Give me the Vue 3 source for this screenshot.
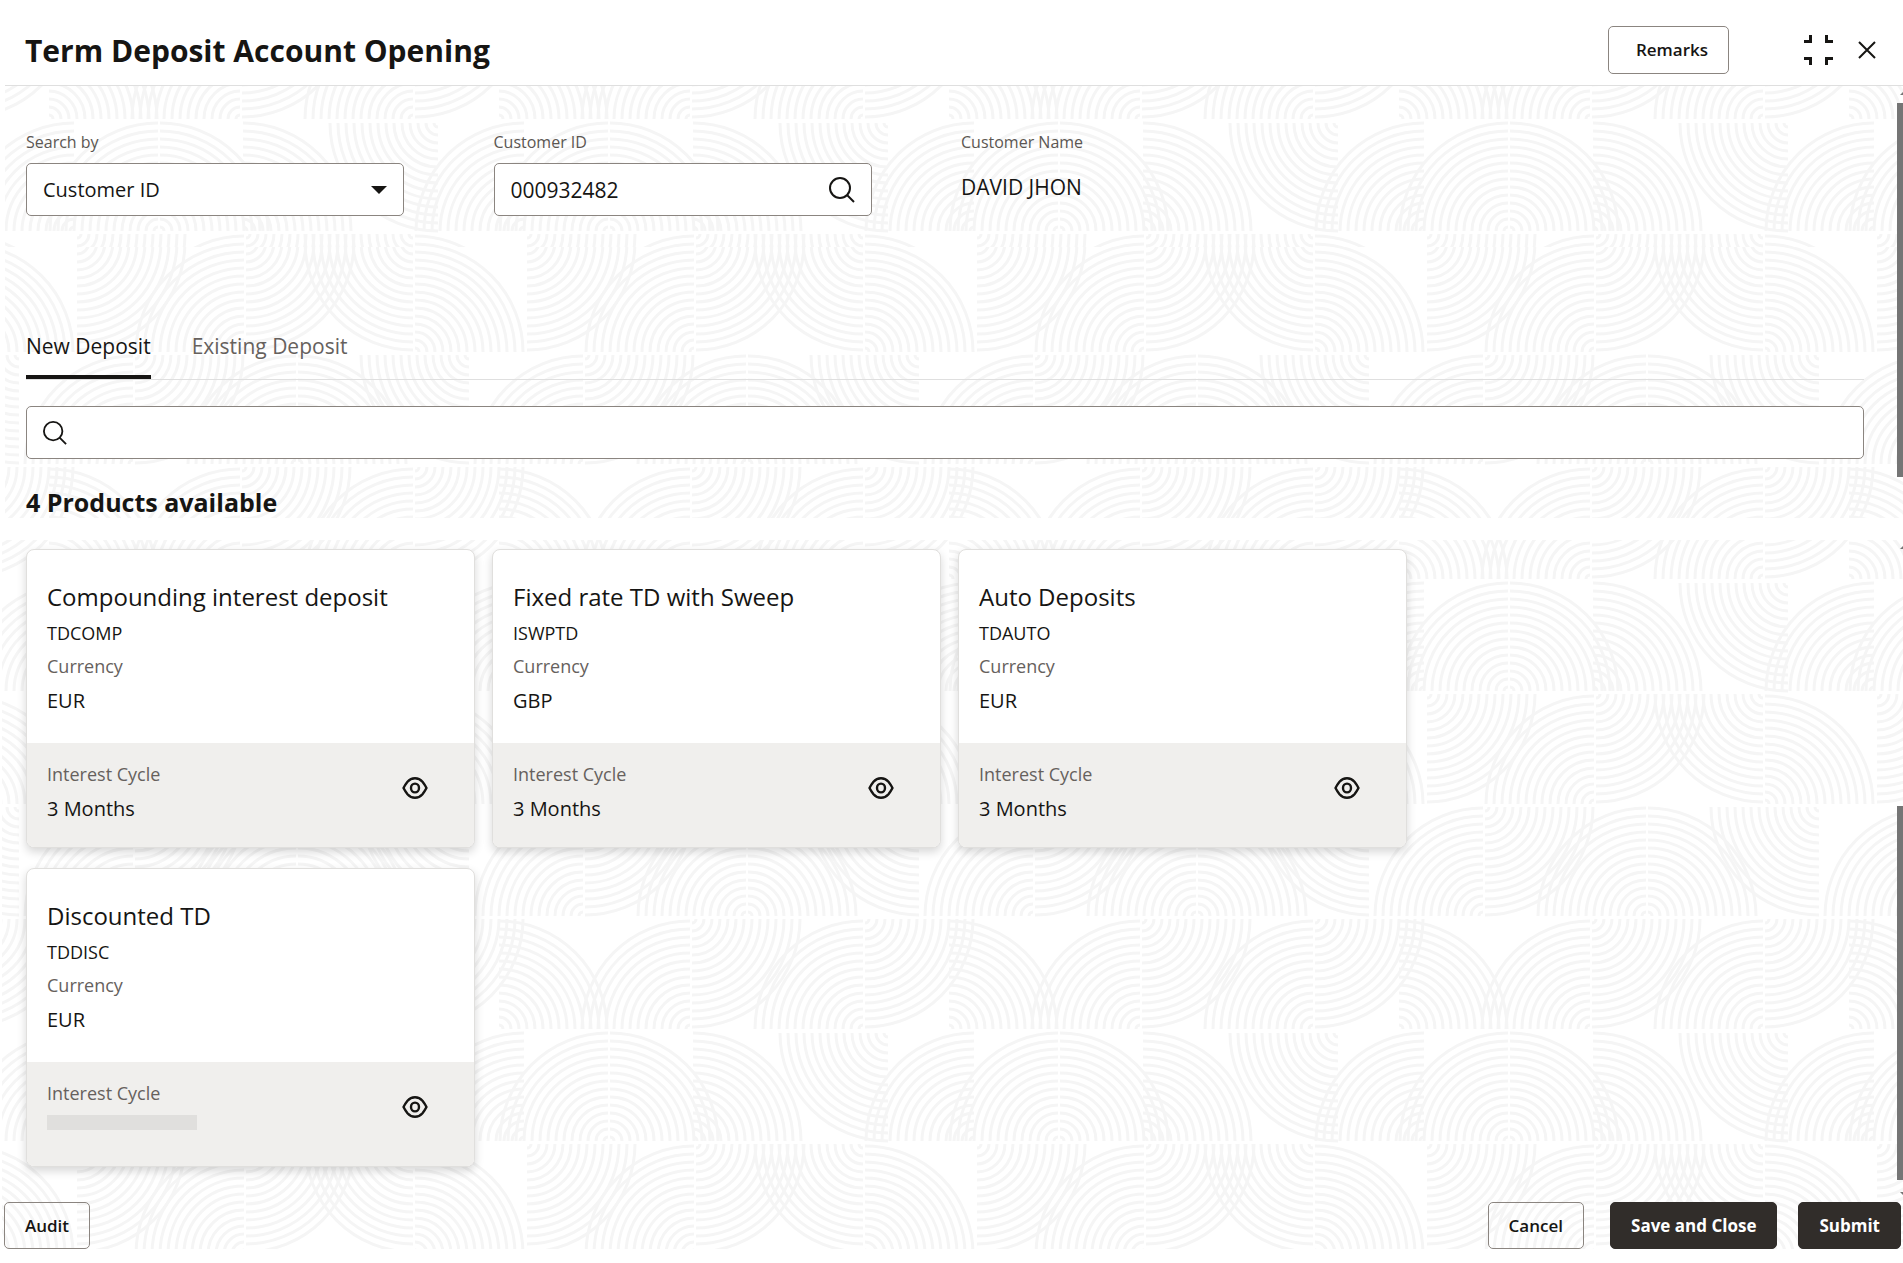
<template>
  <div class="page">
    <header class="page-header">
      <h1>Term Deposit Account Opening</h1>
      <div class="header-actions">
        <button class="btn remarks">Remarks</button>
        <button class="icon-btn" aria-label="Collapse">
          <svg width="29" height="30" viewBox="0 0 29 30" fill="none" stroke="#161513" stroke-width="3">
            <path d="M0 6.500h6.500V0M29 6.500h-6.500V0M0 23.500h6.500V30M29 23.500h-6.500V30" />
          </svg>
        </button>
        <button class="icon-btn" aria-label="Close">
          <svg width="18" height="18" viewBox="0 0 18 18" fill="none" stroke="#161513" stroke-width="2">
            <path d="M1 1l16 16M17 1L1 17" />
          </svg>
        </button>
      </div>
    </header>

    <div class="upper">
      <section class="search-section arcs">
        <div class="field">
          <label for="searchBy">Search by</label>
          <div class="control">
            <select id="searchBy" v-model="searchBy">
              <option>Customer ID</option>
              <option>Account Number</option>
            </select>
            <svg class="caret" width="16" height="8" viewBox="0 0 16 8">
              <path d="M0 0h16L8 8z" fill="#161513" />
            </svg>
          </div>
        </div>

        <div class="field">
          <label for="customerId">Customer ID</label>
          <div class="control">
            <input id="customerId" v-model="customerId" type="text" />
            <button class="icon-btn" aria-label="Find customer">
              <svg width="26" height="26" viewBox="0 0 26 26" fill="none" stroke="#161513" stroke-width="2">
                <circle cx="11" cy="11" r="10" />
                <path d="M18 18l7 7" />
              </svg>
            </button>
          </div>
        </div>

        <div class="field">
          <span class="label">Customer Name</span>
          <span class="value">DAVID JHON</span>
        </div>
      </section>

      <section class="filter-section arcs">
        <div class="tabs" role="tablist">
          <button
            v-for="tab in tabs"
            :key="tab"
            role="tab"
            class="tab"
            :class="{ active: tab === activeTab }"
            :aria-selected="tab === activeTab"
            @click="activeTab = tab"
          >
            {{ tab }}
          </button>
        </div>

        <div class="control product-search">
          <svg width="24" height="24" viewBox="0 0 26 26" fill="none" stroke="#161513" stroke-width="2">
            <circle cx="11" cy="11" r="10" />
            <path d="M18 18l7 7" />
          </svg>
          <input v-model="query" type="text" aria-label="Search products" />
        </div>

        <h2>{{ products.length }} Products available</h2>
      </section>

      <div class="scrollbar">
        <i class="arrow up"></i>
        <i class="thumb"></i>
      </div>
    </div>

    <main class="lower arcs">
      <div class="cards">
        <article v-for="product in products" :key="product.code" class="card">
          <div class="card-body">
            <h3>{{ product.name }}</h3>
            <p class="code">{{ product.code }}</p>
            <p class="caption">Currency</p>
            <p class="detail">{{ product.currency }}</p>
          </div>
          <div class="card-footer">
            <div>
              <p class="caption">Interest Cycle</p>
              <p v-if="product.cycle" class="detail">{{ product.cycle }}</p>
              <div v-else class="skeleton"></div>
            </div>
            <button class="icon-btn view" :aria-label="'View ' + product.name">
              <svg width="26" height="22" viewBox="0 0 26 22" fill="none" stroke="#161513" stroke-width="2.400">
                <path d="M1.500 11Q3 8 5.500 4.800Q8.500 1.300 13 1.300T20.500 4.800Q23 8 24.500 11Q23 14 20.500 17.200Q17.500 20.700 13 20.700T5.500 17.200Q3 14 1.500 11Z" stroke-linejoin="round" />
                <ellipse cx="13" cy="11" rx="4" ry="4.400" />
              </svg>
            </button>
          </div>
        </article>
      </div>

      <footer class="page-footer">
        <button class="btn">Audit</button>
        <div class="footer-actions">
          <button class="btn cancel">Cancel</button>
          <button class="btn dark">Save and Close</button>
          <button class="btn dark">Submit</button>
        </div>
      </footer>

      <div class="scrollbar">
        <i class="arrow up"></i>
        <i class="thumb"></i>
        <i class="arrow down"></i>
      </div>
    </main>
  </div>
</template>

<script setup>
import { ref } from "vue"

const searchBy = ref("Customer ID")
const customerId = ref("000932482")
const query = ref("")

const tabs = ["New Deposit", "Existing Deposit"]
const activeTab = ref("New Deposit")

const products = [
  { name: "Compounding interest deposit", code: "TDCOMP", currency: "EUR", cycle: "3 Months" },
  { name: "Fixed rate TD with Sweep", code: "ISWPTD", currency: "GBP", cycle: "3 Months" },
  { name: "Auto Deposits", code: "TDAUTO", currency: "EUR", cycle: "3 Months" },
  { name: "Discounted TD", code: "TDDISC", currency: "EUR", cycle: "" }
]
</script>

<style>
body {
  margin: 0;
  background: #fff;
}
</style>

<style scoped>
* {
  box-sizing: border-box;
}

.page {
  font-family: "Open Sans", "Noto Sans", sans-serif;
  color: #161513;
  padding-bottom: 14px;
}

h1,
h2,
h3,
p {
  margin: 0;
}

button,
input,
select {
  font-family: inherit;
  color: inherit;
}

/* quarter circles, four rows to a tile */
.arcs {
  background-image: url("data:image/svg+xml,%3Csvg xmlns='http://www.w3.org/2000/svg' width='450' height='450' fill='none' stroke='%23f5f5f5' stroke-width='3'%3E%3Cdefs%3E%3Cpath id='q' d='M4 0A4 4 0 0 1 0 4M12 0A12 12 0 0 1 0 12M20 0A20 20 0 0 1 0 20M28 0A28 28 0 0 1 0 28M36 0A36 36 0 0 1 0 36M44 0A44 44 0 0 1 0 44M52 0A52 52 0 0 1 0 52M60 0A60 60 0 0 1 0 60M68 0A68 68 0 0 1 0 68M76 0A76 76 0 0 1 0 76M84 0A84 84 0 0 1 0 84M92 0A92 92 0 0 1 0 92M100 0A100 100 0 0 1 0 100M108 0A108 108 0 0 1 0 108'/%3E%3C/defs%3E%3Cg%3E%3Cuse href='%23q' transform='translate(49 111) scale(1 -1)'/%3E%3Cuse href='%23q' transform='translate(240 111) scale(-1 -1)'/%3E%3Cuse href='%23q' transform='translate(242 1)'/%3E%3Cuse href='%23q' transform='translate(413 111) scale(-1 -1)'/%3E%3Cuse href='%23q' transform='translate(415 1)'/%3E%3Cuse href='%23q' transform='translate(-35 1)'/%3E%3C/g%3E%3Cg%3E%3Cuse href='%23q' transform='translate(74 223) scale(-1 -1)'/%3E%3Cuse href='%23q' transform='translate(524 223) scale(-1 -1)'/%3E%3Cuse href='%23q' transform='translate(158 223) scale(-1 -1)'/%3E%3Cuse href='%23q' transform='translate(160 223) scale(1 -1)'/%3E%3Cuse href='%23q' transform='translate(243 223) scale(1 -1)'/%3E%3Cuse href='%23q' transform='translate(438 115) scale(-1 1)'/%3E%3C/g%3E%3Cg%3E%3Cuse href='%23q' transform='translate(77 226)'/%3E%3Cuse href='%23q' transform='translate(244 336) scale(-1 -1)'/%3E%3Cuse href='%23q' transform='translate(246 226)'/%3E%3Cuse href='%23q' transform='translate(413 226) scale(-1 1)'/%3E%3Cuse href='%23q' transform='translate(415 336) scale(1 -1)'/%3E%3Cuse href='%23q' transform='translate(-35 336) scale(1 -1)'/%3E%3C/g%3E%3Cg%3E%3Cuse href='%23q' transform='translate(133 448) scale(-1 -1)'/%3E%3Cuse href='%23q' transform='translate(135 339)'/%3E%3Cuse href='%23q' transform='translate(296 448) scale(-1 -1)'/%3E%3Cuse href='%23q' transform='translate(298 448) scale(1 -1)'/%3E%3Cuse href='%23q' transform='translate(19 339) scale(-1 1)'/%3E%3Cuse href='%23q' transform='translate(469 339) scale(-1 1)'/%3E%3C/g%3E%3C/svg%3E");
}

.page-header {
  display: flex;
  align-items: center;
  justify-content: space-between;
  height: 86px;
  margin-left: 5px;
  padding: 14px 27px 0 20px;
  border-bottom: 1px solid #dfdfdf;
}

h1 {
  padding-top: 2px;
  font-size: 30px;
  line-height: 40px;
  font-weight: 700;
}

.header-actions {
  display: flex;
  align-items: center;
  height: 48px;
}

.header-actions .icon-btn {
  margin-left: 25px;
}

.header-actions .remarks {
  height: 48px;
  padding: 0 20px 0 27px;
  margin-right: 50px;
}

.btn {
  height: 47px;
  padding: 0 20px;
  border: 1px solid #8b8580;
  border-radius: 5px;
  background: transparent;
  font-size: 17px;
  line-height: 24px;
  font-weight: 600;
  cursor: pointer;
}

.btn.dark {
  border-color: #312d2a;
  background: #312d2a;
  color: #fff;
  font-weight: 700;
}

.icon-btn {
  display: flex;
  padding: 0;
  border: none;
  background: none;
  cursor: pointer;
}

.upper {
  position: relative;
  margin-left: 5px;
}

.search-section {
  display: grid;
  grid-template-columns: repeat(4, 1fr);
  gap: 32px;
  padding: 44px 39px 31px 21px;
  background-position: -5px -78px;
}

.field {
  display: flex;
  flex-direction: column;
  max-width: 378px;
}

.field label,
.field .label {
  margin-bottom: 9px;
  font-size: 16px;
  line-height: 24px;
  color: #5b5652;
}

.field .value {
  font-size: 21px;
  line-height: 48px;
}

.control {
  display: flex;
  align-items: center;
  height: 53px;
  padding: 0 16px;
  border: 1px solid #8b8580;
  border-radius: 5px;
  background: #fff;
}

.control input,
.control select {
  flex: 1;
  min-width: 0;
  height: 100%;
  padding: 0;
  border: none;
  outline: none;
  background: none;
  font-size: 20px;
}

.control input {
  font-size: 21px;
}

.control select {
  appearance: none;
}

.control .caret {
  pointer-events: none;
}

.filter-section {
  padding: 80px 39px 0 21px;
  background-position: -5px -231px;
}

.tabs {
  display: flex;
  gap: 41px;
  border-bottom: 1px solid #dfdfdf;
}

.tab {
  height: 52px;
  padding: 0 0 10px;
  border: none;
  border-bottom: 4px solid transparent;
  background: none;
  font-size: 21px;
  line-height: 32px;
  font-weight: 500;
  color: #66615d;
  cursor: pointer;
}

.tab.active {
  border-color: #161513;
  color: #161513;
}

.product-search {
  margin-top: 26px;
}

.product-search input {
  margin-left: 12px;
}

h2 {
  padding-top: 28px;
  font-size: 25px;
  line-height: 31px;
  font-weight: 700;
}

.lower {
  position: relative;
  margin-top: 22px;
  margin-left: 2px;
  background-position: -2px -522px;
}

.cards {
  display: flex;
  flex-wrap: wrap;
  gap: 20px 17px;
  padding: 9px 39px 35px 24px;
}

.card {
  width: 449px;
  border: 1px solid #e0dfdd;
  border-radius: 8px;
  background: #fff;
  box-shadow: 0 4px 10px rgba(0, 0, 0, 0.16);
  overflow: hidden;
}

.card-body {
  padding: 31px 20px 24px;
}

.card-footer {
  display: flex;
  align-items: flex-start;
  justify-content: space-between;
  height: 104px;
  padding: 14px 46px 0 20px;
  background: #f0efed;
}

.view {
  margin-top: 20px;
}

h3 {
  font-size: 24px;
  line-height: 32px;
  font-weight: 500;
}

.code,
.caption {
  font-size: 18px;
  line-height: 34px;
}

.code {
  padding-top: 4px;
  line-height: 32px;
  font-weight: 500;
}

.caption {
  color: #66615d;
}

.detail {
  font-size: 20px;
  line-height: 36px;
}

.skeleton {
  width: 150px;
  height: 15px;
  margin-top: 5px;
  background: #e0dfdd;
}

.page-footer,
.footer-actions {
  display: flex;
  justify-content: space-between;
}

.page-footer {
  padding: 0 2px;
}

.footer-actions {
  gap: 21px;
}

.cancel {
  margin-right: 5px;
}

/* scroll tracks lie over the right edge of each pane */
.scrollbar {
  position: absolute;
  top: 6px;
  right: 0;
  bottom: 0;
  display: flex;
  flex-direction: column;
  width: 6px;
  overflow: hidden;
}

.lower .scrollbar {
  bottom: 54px;
}

.thumb {
  height: 374px;
  margin: 8px 0 12px;
  background: #757575;
  flex: none;
}

.arrow {
  align-self: flex-end;
  width: 3px;
  height: 3px;
  background: #757575;
  flex: none;
}

.arrow.up {
  clip-path: polygon(100% 0, 100% 100%, 0 100%);
}

.lower .arrow.up {
  margin-bottom: auto;
}

.arrow.down {
  clip-path: polygon(0 0, 100% 0, 100% 100%);
}
</style>
